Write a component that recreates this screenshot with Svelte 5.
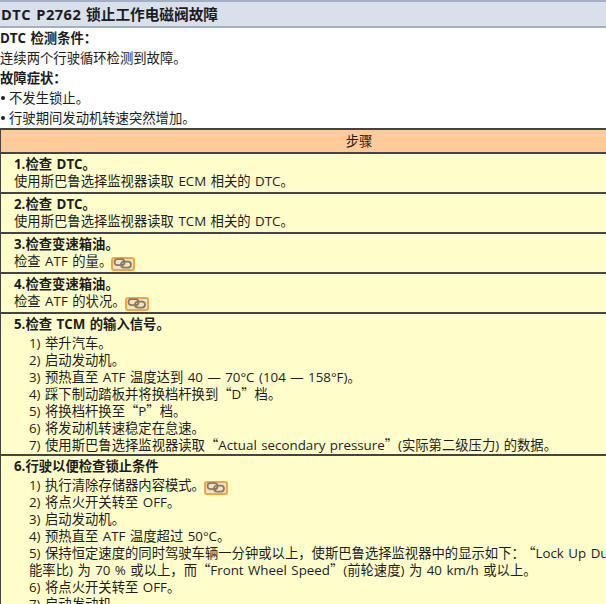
{#snippet chain()}
  <span class="chain">
    <svg width="20" height="11" viewBox="0 0 20 11" fill="none">
      <rect x="1.5" y="1.2" width="10" height="6" rx="3" stroke="#8c7a60" stroke-width="1.8" />
      <rect x="8" y="3.6" width="10" height="6" rx="3" stroke="#8c7a60" stroke-width="1.8" />
    </svg>
  </span>
{/snippet}

<div class="page" lang="zh-CN">
  <h1><span class="code">DTC P2762</span> 锁止工作电磁阀故障</h1>
  <p class="label">DTC 检测条件：</p>
  <p>连续两个行驶循环检测到故障。</p>
  <p class="label">故障症状：</p>
  <p class="bullet"><span class="dot"></span>不发生锁止。</p>
  <p class="bullet"><span class="dot"></span>行驶期间发动机转速突然增加。</p>

  <div class="table">
    <div class="head">步骤</div>

    <div class="row">
      <b>1.检查 DTC。</b>
      <div>使用斯巴鲁选择监视器读取 ECM 相关的 DTC。</div>
    </div>
    <div class="row">
      <b>2.检查 DTC。</b>
      <div>使用斯巴鲁选择监视器读取 TCM 相关的 DTC。</div>
    </div>
    <div class="row">
      <b>3.检查变速箱油。</b>
      <div>检查 ATF 的量。{@render chain()}</div>
    </div>
    <div class="row">
      <b>4.检查变速箱油。</b>
      <div>检查 ATF 的状况。{@render chain()}</div>
    </div>
    <div class="row">
      <b>5.检查 TCM 的输入信号。</b>
      <ol>
        <li>1) 举升汽车。</li>
        <li>2) 启动发动机。</li>
        <li>3) 预热直至 ATF 温度达到 40 — 70°C (104 — 158°F)。</li>
        <li>4) 踩下制动踏板并将换档杆换到<span class="q">“</span>D<span class="q">”</span>档。</li>
        <li>5) 将换档杆换至<span class="q">“</span>P<span class="q">”</span>档。</li>
        <li>6) 将发动机转速稳定在怠速。</li>
        <li>7) 使用斯巴鲁选择监视器读取<span class="q">“</span>Actual secondary pressure<span class="q">”</span>(实际第二级压力) 的数据。</li>
      </ol>
    </div>
    <div class="row">
      <b>6.行驶以便检查锁止条件</b>
      <ol>
        <li>1) 执行清除存储器内容模式。{@render chain()}</li>
        <li>2) 将点火开关转至 OFF。</li>
        <li>3) 启动发动机。</li>
        <li>4) 预热直至 ATF 温度超过 50°C。</li>
        <li>5) 保持恒定速度的同时驾驶车辆一分钟或以上，使斯巴鲁选择监视器中的显示如下：<span class="q open">“</span>Lock Up Duty Ratio<span class="q">”</span>(锁止功<br />能率比) 为 70 % 或以上，而<span class="q">“</span>Front Wheel Speed<span class="q">”</span>(前轮速度) 为 40 km/h 或以上。</li>
        <li>6) 将点火开关转至 OFF。</li>
        <li>7) 启动发动机。</li>
      </ol>
    </div>
  </div>
</div>

<style>
  :global(body) {
    margin: 0;
    background: #fff;
  }
  .page {
    width: 606px;
    height: 604px;
    overflow: hidden;
    font-family: "Open Sans", "Noto Sans CJK SC", sans-serif;
    font-size: 13.33px;
    word-spacing: 1px;
    color: #1c1c1c;
  }
  h1 {
    margin: 0;
    height: 24px;
    padding-left: 1px;
    border-top: 2px solid #a3afc4;
    border-bottom: 2px solid #a3afc4;
    background: #d8e0ec;
    font-size: 14.67px;
    font-weight: 700;
    line-height: 24px;
    white-space: nowrap;
  }
  .code {
    letter-spacing: 0.45px;
  }
  p {
    margin: 0;
    height: 20px;
    line-height: 20px;
  }
  .label {
    font-weight: 700;
  }
  .bullet {
    display: flex;
    align-items: center;
    gap: 4px;
    padding-left: 1px;
  }
  .dot {
    width: 4px;
    height: 4px;
    border-radius: 50%;
    background: #222;
  }
  .table {
    width: 800px;
    border-left: 1px solid #444;
    border-top: 2px solid #444;
  }
  .head {
    height: 22px;
    line-height: 22px;
    text-align: center;
    width: 716px;
    background: #ffcc99;
    border-bottom: 2px solid #444;
  }
  .row {
    box-sizing: border-box;
    width: 799px;
    padding: 2px 13px;
    line-height: 17px;
    background: #ffffcc;
    border-bottom: 2px solid #444;
    white-space: nowrap;
  }
  b {
    display: block;
    font-weight: 700;
  }
  ol {
    list-style: none;
    margin: 2px 0 -2px;
    padding: 0 0 0 15px;
  }
  .q {
    font-family: "Noto Sans CJK SC", sans-serif;
    line-height: 0;
  }
  .open {
    margin-left: 4px;
  }
  .chain {
    display: inline-flex;
    align-items: center;
    justify-content: center;
    box-sizing: border-box;
    width: 24px;
    height: 14px;
    margin-left: -1px;
    margin-block: -2px;
    vertical-align: -3px;
    background: #eee3cc;
    border: 2px solid #f5a440;
    border-radius: 3px;
  }
  .chain svg {
    flex: none;
    margin: 0 -2px;
  }
</style>
